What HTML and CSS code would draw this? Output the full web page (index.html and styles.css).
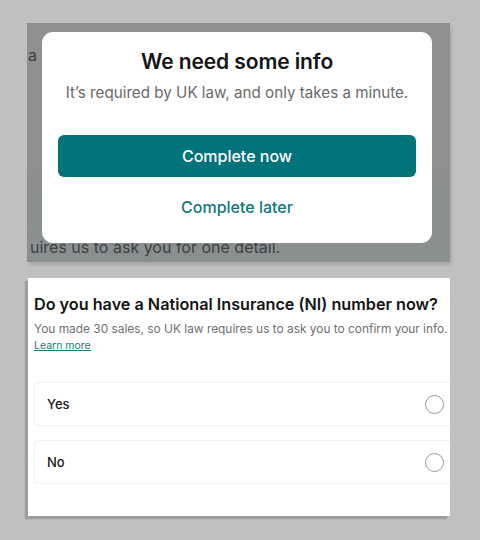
FILE: index.html
```html
<!DOCTYPE html>
<html lang="en">
<head>
<meta charset="utf-8">
<link rel="stylesheet" href="styles.css">
</head>
<body>
<div class="page">
  <div class="shot">
    <div class="behind">
      <p class="behind-top">a</p>
      <p class="behind-bottom">uires us to ask you for one detail.</p>
    </div>
    <div class="modal">
      <h1 class="modal-title">We need some info</h1>
      <p class="modal-sub">It’s required by UK law, and only takes a minute.</p>
      <button class="btn-primary">Complete now</button>
      <button class="btn-link">Complete later</button>
    </div>
  </div>
  <div class="form">
    <h2 class="form-title">Do you have a National Insurance (NI) number now?</h2>
    <p class="form-sub">You made 30 sales, so UK law requires us to ask you to confirm your info.</p>
    <a class="learn" href="#">Learn more</a>
    <div class="options">
      <div class="option"><span>Yes</span><span class="radio"></span></div>
      <div class="option"><span>No</span><span class="radio"></span></div>
    </div>
  </div>
</div>
</body>
</html>
```
FILE: styles.css
```css
* { box-sizing: border-box; }
html, body { margin: 0; padding: 0; }
body {
  background: #c0c0c0;
  font-family: Inter, "Noto Sans", sans-serif;
  width: 480px;
  height: 540px;
  overflow: hidden;
}
.page {
  display: flex;
  flex-direction: column;
  padding: 23px 0 0 27px;
}
.shot {
  width: 423px;
  height: 239px;
  background: linear-gradient(#8f8f8f, #8e8f8f 60%, #899090);
  box-shadow: 2px 3px 3px rgba(0,0,0,0.12);
  display: grid;
}
.behind, .modal { grid-area: 1 / 1; }
.behind {
  display: flex;
  flex-direction: column;
  justify-content: space-between;
  padding: 22px 0 5px 1px;
  color: #3f4141;
  font-size: 16px;
}
.behind p { margin: 0; line-height: 20px; }
.behind-bottom { padding-left: 2px; }
.modal {
  margin: 9px 0 0 15px;
  width: 390px;
  height: 211px;
  background: #fff;
  border-radius: 11px;
  display: flex;
  flex-direction: column;
  align-items: center;
  padding: 17px 16px 0;
}
.modal-title {
  margin: 0;
  font-size: 21px;
  line-height: 26px;
  font-weight: 600;
  color: #151515;
  letter-spacing: -0.1px;
}
.modal-sub {
  margin: 8px 0 0;
  font-size: 15.2px;
  line-height: 20px;
  color: #6a6a6a;
}
.btn-primary {
  margin-top: 32px;
  width: 100%;
  height: 42px;
  border: 0;
  border-radius: 6px;
  background: #00737b;
  color: #fff;
  font-family: inherit;
  font-size: 16px;
  font-weight: 500;
}
.btn-link {
  margin-top: 19px;
  border: 0;
  background: none;
  color: #12767a;
  font-family: inherit;
  font-size: 16px;
  font-weight: 500;
  padding: 0;
  line-height: 22px;
}
.form {
  margin: 16px 0 0 1px;
  width: 422px;
  height: 238px;
  background: #fff;
  box-shadow: -3px 3px 1px rgba(0,0,0,0.18);
  overflow: hidden;
  padding: 15px 0 0 6px;
  display: flex;
  flex-direction: column;
  align-items: flex-start;
}
.form-title {
  margin: 0;
  font-size: 16.2px;
  line-height: 22px;
  font-weight: 600;
  color: #141414;
  white-space: nowrap;
  letter-spacing: 0;
}
.form-sub {
  margin: 6px 0 0;
  font-size: 11.9px;
  line-height: 16px;
  color: #707070;
  white-space: nowrap;
}
.learn {
  margin-top: 2px;
  font-size: 10.5px;
  line-height: 14px;
  color: #1b7b7a;
  text-decoration: underline;
}
.options {
  margin-top: 29px;
  display: flex;
  flex-direction: column;
  gap: 14px;
}
.option {
  width: 430px;
  height: 44px;
  border: 1px solid #f0f0f0;
  border-radius: 4px;
  display: flex;
  align-items: center;
  justify-content: space-between;
  padding: 0 19px 0 12px;
  font-size: 13px;
  font-weight: 500;
  color: #1a1a1a;
}
.radio {
  width: 19px;
  height: 19px;
  border: 1px solid #9a9a9a;
  border-radius: 50%;
}
```
